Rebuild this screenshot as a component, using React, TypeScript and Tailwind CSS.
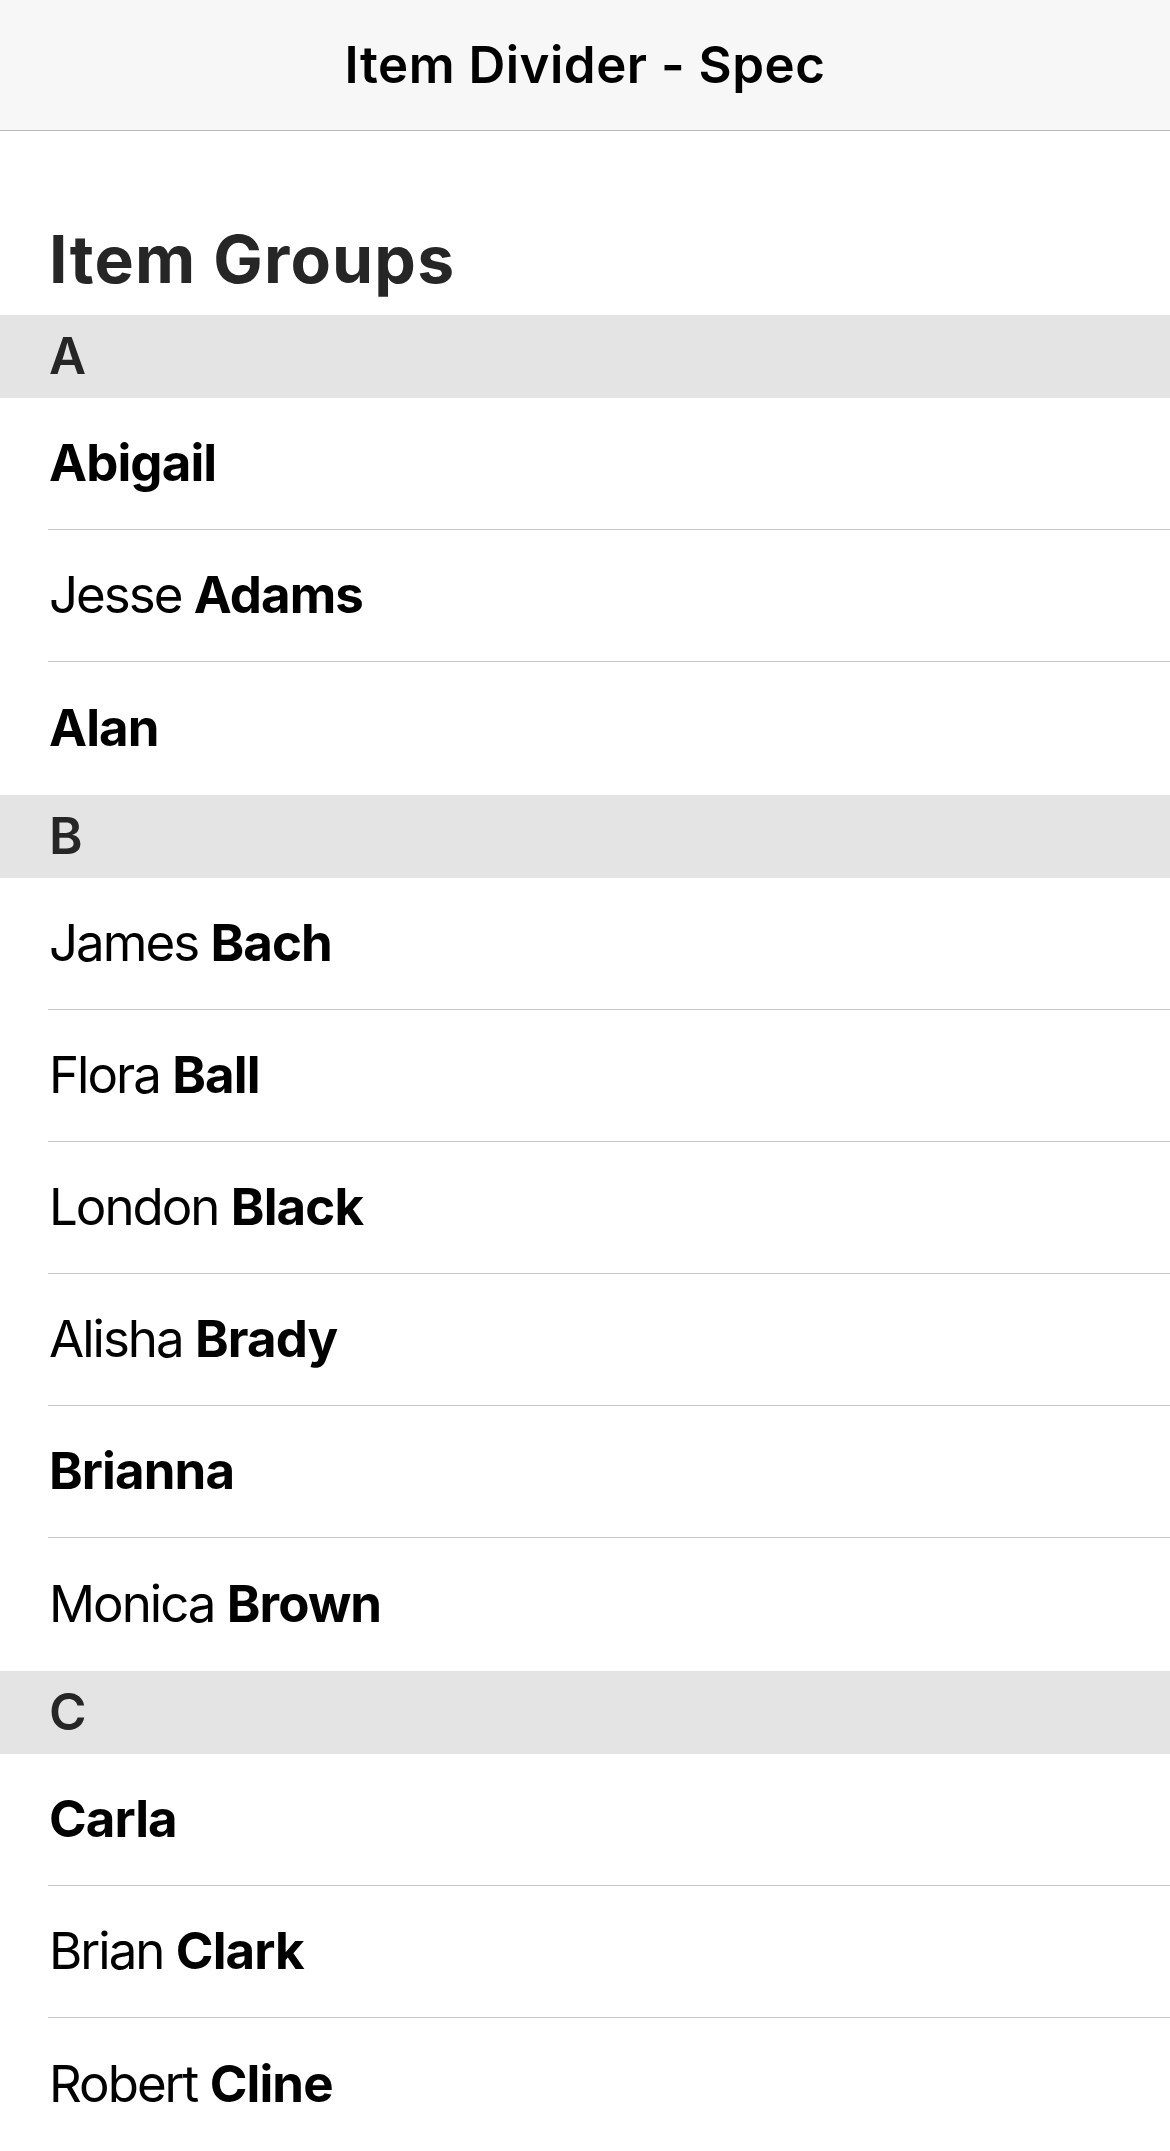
import React from 'react'

type Person = { first?: string; last: string }

const groups: { letter: string; people: Person[] }[] = [
  {
    letter: 'A',
    people: [{ last: 'Abigail' }, { first: 'Jesse', last: 'Adams' }, { last: 'Alan' }],
  },
  {
    letter: 'B',
    people: [
      { first: 'James', last: 'Bach' },
      { first: 'Flora', last: 'Ball' },
      { first: 'London', last: 'Black' },
      { first: 'Alisha', last: 'Brady' },
      { last: 'Brianna' },
      { first: 'Monica', last: 'Brown' },
    ],
  },
  {
    letter: 'C',
    people: [{ last: 'Carla' }, { first: 'Brian', last: 'Clark' }, { first: 'Robert', last: 'Cline' }],
  },
]

export default function App() {
  return (
    <div
      className="min-h-[2151px] bg-white antialiased"
      style={{ fontFamily: 'Inter, "Liberation Sans", sans-serif' }}
    >
      {/* Toolbar */}
      <header className="h-[131px] bg-[#f7f7f7] border-b border-[#b9b9b9] flex items-center justify-center">
        <h1 className="text-[51px] font-semibold text-black tracking-[0.5px]">Item Divider - Spec</h1>
      </header>

      {/* List header */}
      <div className="h-[184px] flex items-end pl-[49px] pb-[23px]">
        <h2 className="text-[66px] leading-none font-bold text-[#262626] tracking-[1.2px]">Item Groups</h2>
      </div>

      {groups.map((group) => (
        <section key={group.letter}>
          <div className="h-[83px] bg-[#e4e4e4] pl-[49px] flex items-center">
            <span className="text-[51px] font-semibold text-[#262626]">{group.letter}</span>
          </div>
          {group.people.map((p, i) => {
            const last = i === group.people.length - 1
            return (
              <div key={p.last} className="pl-[48px]">
                <div
                  className={`flex items-center text-[51px] text-black ${
                    last ? 'h-[133px]' : 'h-[132px] border-b border-[#c8c7cc]'
                  }`}
                >
                  <span className="pl-px">
                    {p.first && <span className="font-normal tracking-[-2px]">{p.first} </span>}
                    <strong className="font-bold tracking-[-0.9px]">{p.last}</strong>
                  </span>
                </div>
              </div>
            )
          })}
        </section>
      ))}
    </div>
  )
}
